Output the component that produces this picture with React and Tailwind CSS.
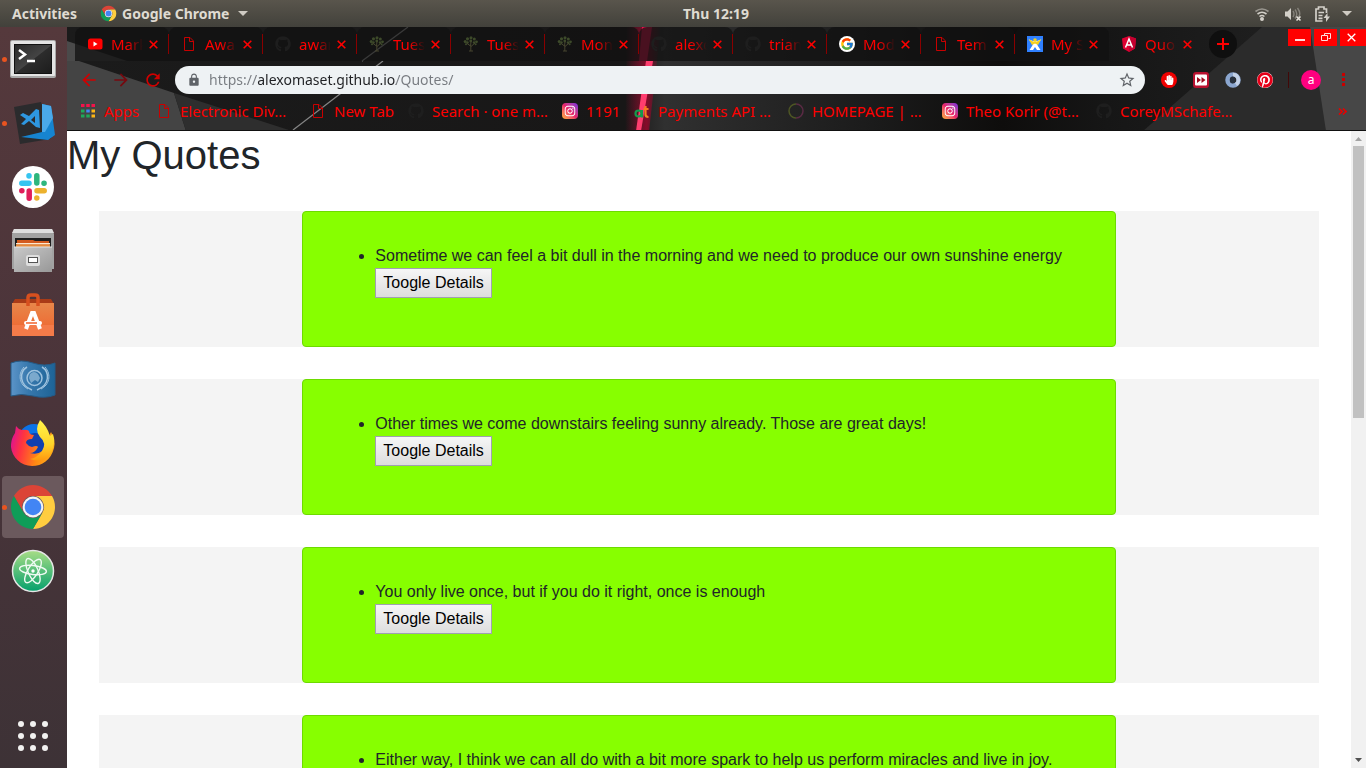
import React from "react";
import { FaGithub, FaInstagram, FaPinterest, FaHandPaper } from "react-icons/fa";
import { FcGoogle } from "react-icons/fc";
import { MdArrowBack, MdArrowForward, MdRefresh, MdStarBorder, MdLock } from "react-icons/md";

/* ---------- small icons ---------- */

function ChromeIcon({ className }) {
  return (
    <svg viewBox="0 0 48 48" className={className} aria-hidden="true">
      <path d="M4.95 13A22 22 0 0 1 43.05 13H24A11 11 0 0 0 14.47 29.5Z" fill="#db4437" />
      <path d="M43.05 13A22 22 0 0 1 24 46L33.53 29.5A11 11 0 0 0 24 13Z" fill="#ffcd40" />
      <path d="M24 46A22 22 0 0 1 4.95 13L14.47 29.5A11 11 0 0 0 33.53 29.5Z" fill="#0f9d58" />
      <circle cx="24" cy="24" r="10.4" fill="#f4f4f4" />
      <circle cx="24" cy="24" r="8.3" fill="#4285f4" />
    </svg>
  );
}

function PageIcon() {
  return (
    <svg viewBox="0 0 16 16" className="size-4 shrink-0" fill="none" stroke="#c80000" aria-hidden="true">
      <path d="M3.5 1.5h5.500l3.500 3.500v9.500h-9zM8.500 1.500v4h4" />
    </svg>
  );
}

function TreeIcon() {
  return (
    <svg viewBox="0 0 16 16" className="size-4 shrink-0" aria-hidden="true">
      <g fill="#3d4a2a">
        <circle cx="2.200" cy="5.500" r="1.500" />
        <circle cx="4.500" cy="2.800" r="1.600" />
        <circle cx="8" cy="1.800" r="1.500" />
        <circle cx="11.300" cy="3" r="1.500" />
        <circle cx="13.500" cy="5.800" r="1.400" />
        <circle cx="4.500" cy="6.500" r="1.200" />
        <circle cx="7.800" cy="5" r="1.400" />
        <circle cx="11" cy="6.500" r="1.200" />
        <circle cx="3" cy="8.300" r="1" />
        <circle cx="12.600" cy="8.300" r="1" />
      </g>
      <path d="M3.500 7 7.500 10 8 5.500M12 7 8 10.500M7.800 9.500v5.500M6 15h4" stroke="#46452f" fill="none" />
    </svg>
  );
}

function GithubIcon() {
  return <FaGithub className="size-4 shrink-0 text-[#1e1e1e]" />;
}

function InstagramIcon() {
  return (
    <span className="flex size-4 shrink-0 items-center justify-center rounded bg-linear-to-tr from-[#ffb02e] via-[#e8206b] to-[#7a1fe0]">
      <FaInstagram className="size-3 text-white" />
    </span>
  );
}

function GoogleIcon() {
  return (
    <span className="flex size-4 shrink-0 items-center justify-center rounded-full bg-white">
      <FcGoogle className="size-3.5" />
    </span>
  );
}

function PeopleIcon() {
  return (
    <svg viewBox="0 0 16 16" className="size-4 shrink-0" aria-hidden="true">
      <path fill="#2f80ff" d="M0 0h16v16H0z" />
      <path d="M2 3.500 6 8.500 2.500 14H6l2-3 2 3h3.500L10 8.500l4-5-4 1.500H6z" fill="#fff" />
      <path d="M1.500 3 5 9l3-1.500L11 9l3.500-6L10 5.500H6z" fill="#f5d020" />
      <circle cx="8" cy="4" r="1.800" fill="#f5d020" />
    </svg>
  );
}

function AngularIcon() {
  return (
    <svg viewBox="0 0 16 16" className="size-4 shrink-0" aria-hidden="true">
      <path d="M8 0l7 2.500-1 10L8 16l-6-3.500-1-10z" fill="#dd0031" />
      <path d="M8 0l7 2.500-1 10L8 16z" fill="#c3002f" />
      <path d="M4.500 11.500 8 3l3.500 8.500M5.800 9h4.400" stroke="#fff" strokeWidth="1.500" fill="none" />
    </svg>
  );
}

function YoutubeIcon() {
  return (
    <svg viewBox="0 0 16 16" className="size-4 shrink-0" aria-hidden="true">
      <rect x="1" y="2.500" width="14.500" height="11" rx="2.500" fill="#ff0000" />
      <path d="M6.500 5.500v5l4-2.500z" fill="#fff" />
    </svg>
  );
}

function AppsIcon() {
  return (
    <svg viewBox="0 0 16 16" className="size-4 shrink-0" aria-hidden="true">
      <path fill="#f5124a" d="M1 1h3.500v3H1zM6.250 1h3.500v3h-3.500zM11.500 1H15v3h-3.500z" />
      <path fill="#1fa95b" d="M1 6.500h3.500v3H1zM1 11.500h3.500v3H1zM6.250 11.500h3.500v3h-3.500z" />
      <path fill="#4285f4" d="M6.250 6.500h3.500v3h-3.500z" />
      <path fill="#fdb515" d="M11.500 6.500H15v3h-3.500zM11.500 11.500H15v3h-3.500z" />
    </svg>
  );
}

function PaymentsIcon() {
  return (
    <svg viewBox="0 0 16 16" className="size-4 shrink-0" fill="none" strokeWidth="2.200" aria-hidden="true">
      <circle cx="4.500" cy="10.500" r="3" stroke="#149a4c" />
      <path d="M8 7v7.500" stroke="#149a4c" />
      <path d="M11.500 3v8.500c0 2 1 2.500 3 2.500M9.500 6h5" stroke="#f57c1f" />
    </svg>
  );
}

function RingIcon() {
  return (
    <svg viewBox="0 0 16 16" className="size-4 shrink-0" fill="none" aria-hidden="true">
      <path d="M8 1a7 7 0 0 0 0 14" stroke="#4d5524" strokeWidth="1.500" />
      <path d="M8 1a7 7 0 0 1 0 14" stroke="#5a2a44" strokeWidth="1.500" />
    </svg>
  );
}

/* ---------- dock icons ---------- */

function TerminalIcon() {
  return (
    <svg viewBox="0 0 46 46" className="size-[46px]" aria-hidden="true">
      <defs>
        <linearGradient id="term" x1="0" y1="0" x2="1" y2="1">
          <stop offset="0" stopColor="#2a2a2a" />
          <stop offset=".5" stopColor="#444" />
          <stop offset=".52" stopColor="#2c2c2c" />
          <stop offset="1" stopColor="#1d1d1d" />
        </linearGradient>
      </defs>
      <rect x="0" y="4" width="46" height="38" rx="2" fill="#a9a9a9" />
      <rect x="1" y="5" width="44" height="35" rx="1" fill="#e4e4e4" />
      <rect x="4" y="8" width="38" height="30" fill="#111" />
      <rect x="5" y="9" width="36" height="28" fill="url(#term)" />
      <path d="M9 14l6 4.500-6 4.500" stroke="#fff" strokeWidth="2.500" fill="none" />
      <path d="M17 25h8" stroke="#fff" strokeWidth="2.500" />
    </svg>
  );
}

function CodeIcon() {
  return (
    <svg viewBox="0 0 46 46" className="size-[46px]" aria-hidden="true">
      <path d="M4 7 31 2l11 35-2 2-30 5z" fill="#2b2b2d" />
      <path d="M32 4l9 2 4 29-7 5-27-3 21-5z" fill="#1684d0" />
      <path d="M32 4l9 2 2 12-8 14-3 0z" fill="#4aa9ea" />
      <path d="M29 10l1 18-4-1-7-6-5 4-3-1 5-5-6-4 3-2 6 3 7-7z" fill="#2e97e0" />
      <path d="M25 16v7l-4-3z" fill="#2b2b2d" />
    </svg>
  );
}

function SlackIcon() {
  return (
    <svg viewBox="0 0 42 42" className="size-[42px]" aria-hidden="true">
      <circle cx="21" cy="21" r="21" fill="#fff" />
      <g strokeWidth="5.500" strokeLinecap="round">
        <path d="M17 9.800v.1M9.800 17.200H17" stroke="#36c5f0" />
        <path d="M24.800 9.800V17M32 17.200h.1" stroke="#2eb67d" />
        <path d="M25 24.800h7.200M24.800 32v.1" stroke="#ecb22e" />
        <path d="M17.200 25v7.200M9.800 24.800h.1" stroke="#e01e5a" />
      </g>
    </svg>
  );
}

function FilesIcon() {
  return (
    <svg viewBox="0 0 42 44" className="h-11 w-[42px]" aria-hidden="true">
      <defs>
        <linearGradient id="cab" x1="0" y1="0" x2="1" y2="1">
          <stop offset="0" stopColor="#c9c9c9" />
          <stop offset="1" stopColor="#989898" />
        </linearGradient>
      </defs>
      <path d="M2 0h38l2 5v35H0V5z" fill="#a2a2a2" />
      <path d="M2 0h38l2 4H0z" fill="#dedede" />
      <path d="M3 9h36v9H3z" fill="#1e1e1e" />
      <path d="M5 11h16l2 1h14v6H5z" fill="#d35a1e" />
      <path d="M4 14h34v1.500H4z" fill="#fbe8cf" />
      <path d="M4 15.500h34V18H4z" fill="#e58a3a" />
      <path d="M2 18h38v25H2z" fill="url(#cab)" />
      <path d="M2 18h38" stroke="#e6e6e6" />
      <rect x="14" y="26" width="14" height="11" rx="2" fill="#dedede" />
      <rect x="16.500" y="28.500" width="9" height="5" fill="#fff" stroke="#555" />
    </svg>
  );
}

function SoftwareIcon() {
  return (
    <svg viewBox="0 0 42 44" className="h-11 w-[42px]" aria-hidden="true">
      <defs>
        <linearGradient id="bag" x1="0" y1="0" x2="0" y2="1">
          <stop offset="0" stopColor="#e7874a" />
          <stop offset="1" stopColor="#f0622d" />
        </linearGradient>
      </defs>
      <path d="M3 6h36l3 5H0z" fill="#a93b17" />
      <path d="M0 10h42v33H0z" fill="url(#bag)" />
      <path d="M0 32h42v11H0z" fill="#f47b49" />
      <path d="M16 13V4.500Q16 2 19 2h4q3 0 3 2.500V13" stroke="#d7501f" strokeWidth="3.500" fill="none" />
      <path d="M14 36 20 20h2l6 16" stroke="#fff" strokeWidth="4" fill="none" />
      <rect x="12" y="28" width="18" height="4" rx="2" fill="#fff" />
      <path d="M14 30h11" stroke="#f0622d" strokeWidth="1.500" />
    </svg>
  );
}

function FlagIcon() {
  return (
    <svg viewBox="0 0 46 38" className="h-[38px] w-[46px]" aria-hidden="true">
      <defs>
        <linearGradient id="flag" x1="0" y1="0" x2="1" y2="0">
          <stop offset="0" stopColor="#5b94c8" />
          <stop offset=".4" stopColor="#3778ad" />
          <stop offset="1" stopColor="#1d6396" />
        </linearGradient>
      </defs>
      <path d="M1 3q10-4 22 0t22 0v32q-10 4-22 1T1 36z" fill="url(#flag)" stroke="#245a86" />
      <g stroke="#9fc3df" fill="none" strokeWidth="1.500">
        <path d="M17 7c-8 5-8 18 5 23M32 7c8 5 8 18-5 23" />
        <path d="M14 7c-7 8-4 18 4 22M35 7c7 8 4 18-4 22" strokeWidth="1" />
        <circle cx="24.500" cy="18" r="7.500" />
      </g>
      <path d="M20 14q4-4 8 0l2 4-2 4-3-2-4 3-2-5z" fill="#8db6d6" opacity=".8" />
    </svg>
  );
}

function FirefoxIcon() {
  return (
    <svg viewBox="0 0 46 46" className="size-[46px]" aria-hidden="true">
      <defs>
        <linearGradient id="fox" x1="0" y1=".4" x2="1" y2=".6">
          <stop offset="0" stopColor="#e0148c" />
          <stop offset=".25" stopColor="#ff3440" />
          <stop offset=".65" stopColor="#ff8a12" />
          <stop offset="1" stopColor="#ffb01c" />
        </linearGradient>
        <linearGradient id="tail" x1="0" y1="0" x2="0" y2="1">
          <stop offset="0" stopColor="#fff44a" />
          <stop offset=".6" stopColor="#ffd42a" />
          <stop offset="1" stopColor="#ff980e" />
        </linearGradient>
      </defs>
      <circle cx="24" cy="20" r="16" fill="#0a73e8" />
      <circle cx="25" cy="24" r="11" fill="#123fae" />
      <path d="M6 6q2 3 6 4 5-1 7 1 0 4 5 4l-2 4q-6 0-6 4 2 3 6 4 5-2 6 0-3 6-8 6 12 3 17-8 1-8 4-13 5 8 3 16c-3 12-12 18-22 18C11 46 2 37 1 27 1 20 3 16 5 13z" fill="url(#fox)" />
      <path d="M30 0q-6 10 0 17 7 6 2 14-5 7-12 8 14 5 21-6 5-10 2-19l-3 2Q37 6 30 0z" fill="url(#tail)" />
    </svg>
  );
}

function AtomIcon() {
  return (
    <svg viewBox="0 0 44 44" className="size-11" aria-hidden="true">
      <defs>
        <linearGradient id="atom" x1="0" y1="0" x2="0" y2="1">
          <stop offset="0" stopColor="#a8dd86" />
          <stop offset="1" stopColor="#05a06c" />
        </linearGradient>
      </defs>
      <circle cx="22" cy="22" r="20.500" fill="url(#atom)" stroke="#e6e6e6" strokeWidth="1.500" />
      <g fill="none" stroke="#effaf3" strokeWidth="1.400">
        <ellipse cx="22" cy="21" rx="13.500" ry="4.500" transform="rotate(7 22 21)" />
        <ellipse cx="22" cy="22" rx="13.500" ry="5" transform="rotate(66 22 22)" />
        <ellipse cx="22" cy="22" rx="13.500" ry="5" transform="rotate(122 22 22)" />
      </g>
      <circle cx="22" cy="22" r="1.700" fill="#fff" />
    </svg>
  );
}

/* ---------- data ---------- */

const dock = [
  { label: "Terminal", icon: <TerminalIcon />, running: true },
  { label: "Visual Studio Code", icon: <CodeIcon />, running: true },
  { label: "Slack", icon: <SlackIcon /> },
  { label: "Files", icon: <FilesIcon /> },
  { label: "Ubuntu Software", icon: <SoftwareIcon /> },
  { label: "Flag", icon: <FlagIcon /> },
  { label: "Firefox", icon: <FirefoxIcon /> },
  { label: "Google Chrome", icon: <ChromeIcon className="size-12" />, running: true, active: true },
  { label: "Atom", icon: <AtomIcon /> },
];

const tabs = [
  { title: "Mark", icon: <YoutubeIcon /> },
  { title: "Awa", icon: <PageIcon /> },
  { title: "awar", icon: <GithubIcon /> },
  { title: "Tues", icon: <TreeIcon /> },
  { title: "Tues", icon: <TreeIcon /> },
  { title: "Mon", icon: <TreeIcon /> },
  { title: "alexo", icon: <GithubIcon /> },
  { title: "trian", icon: <GithubIcon /> },
  { title: "Mod", icon: <GoogleIcon /> },
  { title: "Tem", icon: <PageIcon /> },
  { title: "My S", icon: <PeopleIcon />, last: true },
  { title: "Quo", icon: <AngularIcon />, active: true },
];

const bookmarks = [
  { title: "Apps", icon: <AppsIcon />, width: "w-[76px]" },
  { title: "Electronic Div…", icon: <PageIcon />, width: "w-[154px]" },
  { title: "New Tab", icon: <PageIcon />, width: "w-[98px]" },
  { title: "Search · one m…", icon: <GithubIcon />, width: "w-[154px]" },
  { title: "1191", icon: <InstagramIcon />, width: "w-[72px]" },
  { title: "Payments API …", icon: <PaymentsIcon />, width: "w-[154px]" },
  { title: "HOMEPAGE | …", icon: <RingIcon />, width: "w-[154px]" },
  { title: "Theo Korir (@t…", icon: <InstagramIcon />, width: "w-[154px]" },
  { title: "CoreyMSchafe…", icon: <GithubIcon />, width: "w-[154px]" },
];

const quotes = [
  "Sometime we can feel a bit dull in the morning and we need to produce our own sunshine energy",
  "Other times we come downstairs feeling sunny already. Those are great days!",
  "You only live once, but if you do it right, once is enough",
  "Either way, I think we can all do with a bit more spark to help us perform miracles and live in joy.",
];

/* ---------- desktop shell ---------- */

function TopBar() {
  return (
    <header className="flex h-[27px] shrink-0 items-center bg-linear-to-b from-[#59554c] to-[#42413b] text-sm font-bold text-[#dfdbd2]">
      <div className="flex w-1/2 items-center pl-3">
        <button type="button" className="w-[88px] text-left">Activities</button>
        <button type="button" className="flex items-center gap-[5px]">
          <ChromeIcon className="size-[17px]" />
          <span>Google Chrome</span>
          <svg viewBox="0 0 10 5" className="ml-1 h-[5px] w-[10px]" fill="#cfcbc3" aria-hidden="true">
            <path d="M0 0h10L5 5z" />
          </svg>
        </button>
      </div>
      <time>Thu 12:19</time>
      <div className="ml-auto flex items-center gap-3 pr-[14px]">
        <svg viewBox="0 0 16 16" className="mr-0.5 size-4" fill="none" stroke="#d3d0c9" strokeWidth="1.600" aria-hidden="true">
          <path d="M1.500 5.500q6.500-5 13 0" stroke="#99968f" />
          <path d="M3.500 8q4.500-3.500 9 0M5.500 10.500q2.500-2 5 0" />
          <circle cx="8" cy="13" r="1.200" fill="#d3d0c9" />
        </svg>
        <svg viewBox="0 0 18 16" className="h-4 w-[18px]" fill="none" aria-hidden="true">
          <path d="M1 5.500h2.500L7 2v12l-3.500-3.500H1z" fill="#d3d0c9" />
          <path d="M9 5q2 3 0 6M11 3.500q3.500 4.500 0 9M13.500 2q4 5.500 1 9" stroke="#85827a" strokeWidth="1.400" />
          <path d="M12.500 10.500l4 4M16.500 10.500l-4 4" stroke="#e3e0d9" strokeWidth="1.600" />
        </svg>
        <svg viewBox="0 0 16 16" className="size-4" fill="none" stroke="#d3d0c9" strokeWidth="1.700" aria-hidden="true">
          <path d="M8.500 15H2V3h2.500V1h5.500v2h2.500v4M4.500 6.500h5.500M4.500 9.500h4M4.500 12.300h4" />
          <path d="M13.500 7 9.500 12h2.500v4l4-5.500h-2.500z" fill="#d3d0c9" stroke="none" />
        </svg>
        <svg viewBox="0 0 10 5" className="h-[5px] w-[10px]" fill="#cfcbc3" aria-hidden="true">
          <path d="M0 0h10L5 5z" />
        </svg>
      </div>
    </header>
  );
}

function Dock() {
  return (
    <nav className="flex w-[67px] shrink-0 flex-col gap-0.5 bg-linear-to-b from-[#55393c] via-[#4a343a] to-[#3d3236] pt-px pb-4 pl-0.5">
      {dock.map((app) => (
        <button
          key={app.label}
          type="button"
          aria-label={app.label}
          className={`relative flex size-[62px] shrink-0 items-center justify-center rounded ${app.active ? "bg-[#6b595d]" : ""}`}
        >
          {app.running && <span className="absolute left-0 size-[5px] rounded-full bg-[#e95420]" />}
          {app.icon}
        </button>
      ))}
      <button type="button" aria-label="Show Applications" className="mt-auto flex w-[62px] justify-center">
        <svg viewBox="0 0 32 32" className="size-8" fill="#f2f1f0" aria-hidden="true">
          {[4, 16, 28].map((y) => [4, 16, 28].map((x) => <circle key={`${x}-${y}`} cx={x} cy={y} r="3" />))}
        </svg>
      </button>
    </nav>
  );
}

/* ---------- browser ---------- */

function ThemeArt() {
  return (
    <svg
      viewBox="0 0 1299 104"
      preserveAspectRatio="none"
      className="absolute inset-0 -z-10 size-full"
      aria-hidden="true"
    >
      <defs>
        <linearGradient id="base" x1="0" y1="0" x2="1" y2="0">
          <stop offset="0" stopColor="#1b1b1b" />
          <stop offset=".43" stopColor="#181717" />
          <stop offset=".46" stopColor="#303030" />
          <stop offset=".62" stopColor="#1b1b1b" />
          <stop offset=".72" stopColor="#0e0d0c" />
          <stop offset=".8" stopColor="#161616" />
          <stop offset="1" stopColor="#242424" />
        </linearGradient>
        <linearGradient id="glow" x1="0" y1="0" x2="1" y2="0">
          <stop offset="0" stopColor="#b0002c" stopOpacity="0" />
          <stop offset=".6" stopColor="#b0002c" stopOpacity=".7" />
          <stop offset="1" stopColor="#b0002c" stopOpacity="0" />
        </linearGradient>
      </defs>
      <path fill="url(#base)" d="M0 0h1299v104H0z" />
      <path fill="#4a4a4a" d="M0 14 60 34H0z" />
      <path fill="#444444" d="M0 34h12l95 32 12 38H0z" />
      <path fill="#2e2e2e" d="M107 66 225 104H119z" />
      <path fill="#2b2b2b" d="M1195 0h50l15 104h-184z" />
      <path fill="#474747" d="M1243 0h56v104h-40z" />
      <path stroke="#b0b0b0" strokeWidth="1.300" d="M341 0 295 34" />
      <path stroke="#858585" strokeWidth="1.200" d="M316 34 226 103" />
      <path fill="url(#glow)" d="M560 0h34l-12 104h-24z" />
      <path fill="#f0104e" d="M575 0h10l-5 34h-8z" />
      <path fill="#ff3d6e" d="M579 34h7l-12 70h-5z" />
    </svg>
  );
}

function TabStrip() {
  return (
    <div className="flex h-[34px] pl-2">
      <div role="tablist" className="flex min-w-0">
        {tabs.map((tab, i) => (
          <div
            key={i}
            className={`flex w-[94px] items-center rounded-t-lg pl-3 ${tab.active ? "" : "bg-[#111111]/75"}`}
          >
            <button type="button" role="tab" aria-selected={!!tab.active} className="flex items-center gap-2">
              {tab.icon}
              <span className="w-8 overflow-hidden text-left text-[15px] leading-5 whitespace-nowrap text-[#ff0000] [mask-image:linear-gradient(to_right,black_50%,transparent)]">
                {tab.title}
              </span>
            </button>
            <button type="button" aria-label={`Close ${tab.title}`} className="ml-1.5">
              <svg viewBox="0 0 9 9" className="size-[9px]" stroke="#ff0000" strokeWidth="1.600" aria-hidden="true">
                <path d="M.7.7l7.600 7.600M8.300.7.7 8.300" />
              </svg>
            </button>
            {!tab.active && !tab.last && <span className="ml-auto h-5 w-px bg-[#8a0000]" />}
          </div>
        ))}
      </div>
      <button
        type="button"
        aria-label="New tab"
        className="mt-[3px] ml-1.5 flex size-7 items-center justify-center rounded-full bg-[#0f0f0f]"
      >
        <svg viewBox="0 0 12 12" className="size-3" stroke="#ff0000" strokeWidth="2" aria-hidden="true">
          <path d="M6 0v12M0 6h12" />
        </svg>
      </button>
      <div className="mt-0.5 ml-auto flex h-[17px] gap-[3px]">
        <button type="button" aria-label="Minimize" className="flex w-[23px] items-end justify-center bg-[#ff0000] pb-[5px]">
          <span className="h-0.5 w-2.5 bg-white/85" />
        </button>
        <button type="button" aria-label="Restore" className="flex w-[23px] items-center justify-center bg-[#ff0000]">
          <svg viewBox="0 0 10 9" className="h-[9px] w-2.5" fill="none" stroke="#ffe0e0" aria-hidden="true">
            <path d="M3.500 2.500v-2h6v5h-2M.5 2.500h6v5h-6z" />
          </svg>
        </button>
        <button type="button" aria-label="Close window" className="flex w-[26px] items-center justify-center bg-[#ff0000] pr-1">
          <svg viewBox="0 0 9 9" className="size-[9px]" stroke="#fff" strokeWidth="1.300" aria-hidden="true">
            <path d="M.7.7l7.600 7.600M8.300.7.7 8.300" />
          </svg>
        </button>
      </div>
    </div>
  );
}

function ToolButton({ label, children }) {
  return (
    <button type="button" aria-label={label} className="flex size-8 shrink-0 items-center justify-center">
      {children}
    </button>
  );
}

function Toolbar() {
  return (
    <div className="flex h-[37px] items-center pr-[7px] pl-1.5">
      <ToolButton label="Back">
        <MdArrowBack className="size-5 text-[#d00000]" />
      </ToolButton>
      <ToolButton label="Forward">
        <MdArrowForward className="size-5 text-[#77090f]" />
      </ToolButton>
      <ToolButton label="Reload">
        <MdRefresh className="size-5 text-[#d00000]" />
      </ToolButton>
      <label className="mr-2 ml-1.5 flex h-7 min-w-0 flex-1 items-center rounded-full bg-[#eef2f4] pr-[9px] pl-3">
        <MdLock className="size-3.5 text-[#5f6368]" />
        <span className="sr-only">Address</span>
        <input
          type="text"
          defaultValue="https://alexomaset.github.io/Quotes/"
          className="ml-2 min-w-0 flex-1 bg-[linear-gradient(to_right,#777b80_48px,#202124_48px,#202124_187px,#777b80_187px)] bg-clip-text text-sm text-transparent outline-none"
        />
        <MdStarBorder className="size-[18px] text-[#5f6368]" />
      </label>
      <ToolButton label="Ad blocker">
        <span className="flex size-4 items-center justify-center rounded-full bg-[#f00000]">
          <FaHandPaper className="size-2.5 text-white" />
        </span>
      </ToolButton>
      <ToolButton label="Video speed">
        <svg viewBox="0 0 16 16" className="size-4" aria-hidden="true">
          <rect width="16" height="16" rx="3" fill="#b81230" />
          <rect x="2" y="2.500" width="12" height="11" rx="1" fill="#fff" />
          <path d="M4 5v6L8 8zM8.500 5v6l4-3z" fill="#a00d20" />
        </svg>
      </ToolButton>
      <ToolButton label="JSON viewer">
        <svg viewBox="0 0 16 16" className="size-4" fill="none" aria-hidden="true">
          <circle cx="8" cy="8" r="5.500" stroke="#8ba6cf" strokeWidth="4.500" />
          <path d="M8 2.500a5.500 5.500 0 0 1 3 10" stroke="#c3d1e6" strokeWidth="3.500" />
          <ellipse cx="7.500" cy="8" rx="2.500" ry="3.500" fill="#27313f" />
        </svg>
      </ToolButton>
      <ToolButton label="Pinterest">
        <span className="rounded-full bg-white">
          <FaPinterest className="size-4 text-[#e60019]" />
        </span>
      </ToolButton>
      <span className="mr-1.5 ml-[7px] h-4 w-px bg-[#420808]" />
      <ToolButton label="Profile">
        <span className="flex size-5 items-center justify-center rounded-full bg-[#ff007f] text-xs leading-none text-white">a</span>
      </ToolButton>
      <ToolButton label="Menu">
        <svg viewBox="0 0 3 13" className="h-[13px] w-[3px]" fill="#c80000" aria-hidden="true">
          <path d="M0 0h3v3H0zM0 5h3v3H0zM0 10h3v3H0z" />
        </svg>
      </ToolButton>
    </div>
  );
}

function BookmarksBar() {
  return (
    <div className="flex h-[33px] items-start border-b border-[#111111] pt-[3px] pl-[13px]">
      {bookmarks.map((b) => (
        <a
          key={b.title}
          href="#"
          className={`flex h-5 shrink-0 items-center gap-2 text-[15px] whitespace-nowrap text-[#ff0000] ${b.width}`}
        >
          {b.icon}
          <span>{b.title}</span>
        </a>
      ))}
      <button type="button" aria-label="More bookmarks" className="mr-[19px] ml-auto flex h-5 items-center">
        <svg viewBox="0 0 9 7" className="h-[7px] w-[9px]" fill="none" stroke="#e80000" strokeWidth="1.600" aria-hidden="true">
          <path d="M1 .5l3 3-3 3M5 .5l3 3-3 3" />
        </svg>
      </button>
    </div>
  );
}

function Quote({ text }) {
  return (
    <section className="bg-[#f4f4f4]">
      <article className="mx-auto w-2/3 rounded border border-[#6ddb00] bg-[#87ff00] p-8">
        <ul className="mb-4 list-disc pl-10">
          <li>
            {text}
            <button
              type="button"
              className="block h-[30px] border border-[#a0a0b0] bg-linear-to-b from-[#f6f6f6] to-[#dddddd] px-[7px] text-black"
            >
              Toogle Details
            </button>
          </li>
        </ul>
      </article>
    </section>
  );
}

function Scrollbar() {
  return (
    <div className="flex w-[15px] shrink-0 flex-col items-center bg-[#f1f1f1]" aria-hidden="true">
      <svg viewBox="0 0 15 15" className="size-[15px] shrink-0" fill="#a3a3a3">
        <path d="M4 10h7L7.500 6z" />
      </svg>
      <div className="h-[272px] w-[11px] bg-[#c1c1c1]" />
      <svg viewBox="0 0 15 15" className="mt-auto size-[15px] shrink-0" fill="#505050">
        <path d="M4 5h7L7.500 9z" />
      </svg>
    </div>
  );
}

export default function App() {
  return (
    <div className="flex h-screen flex-col overflow-hidden bg-white font-['Noto_Sans',sans-serif]">
      <TopBar />
      <div className="flex min-h-0 flex-1">
        <Dock />
        <div className="flex min-w-0 flex-1 flex-col">
          <div className="relative isolate shrink-0 overflow-hidden">
            <ThemeArt />
            <TabStrip />
            <Toolbar />
            <BookmarksBar />
          </div>
          <div className="flex min-h-0 flex-1">
            <main className="min-w-0 flex-1 overflow-hidden font-['Liberation_Sans',Arial,sans-serif] text-base leading-6 text-[#212529]">
              <h1 className="text-[40px] leading-[48px]">My Quotes</h1>
              <div className="m-8 flex flex-col gap-8">
                {quotes.map((q) => (
                  <Quote key={q} text={q} />
                ))}
              </div>
            </main>
            <Scrollbar />
          </div>
        </div>
      </div>
    </div>
  );
}
